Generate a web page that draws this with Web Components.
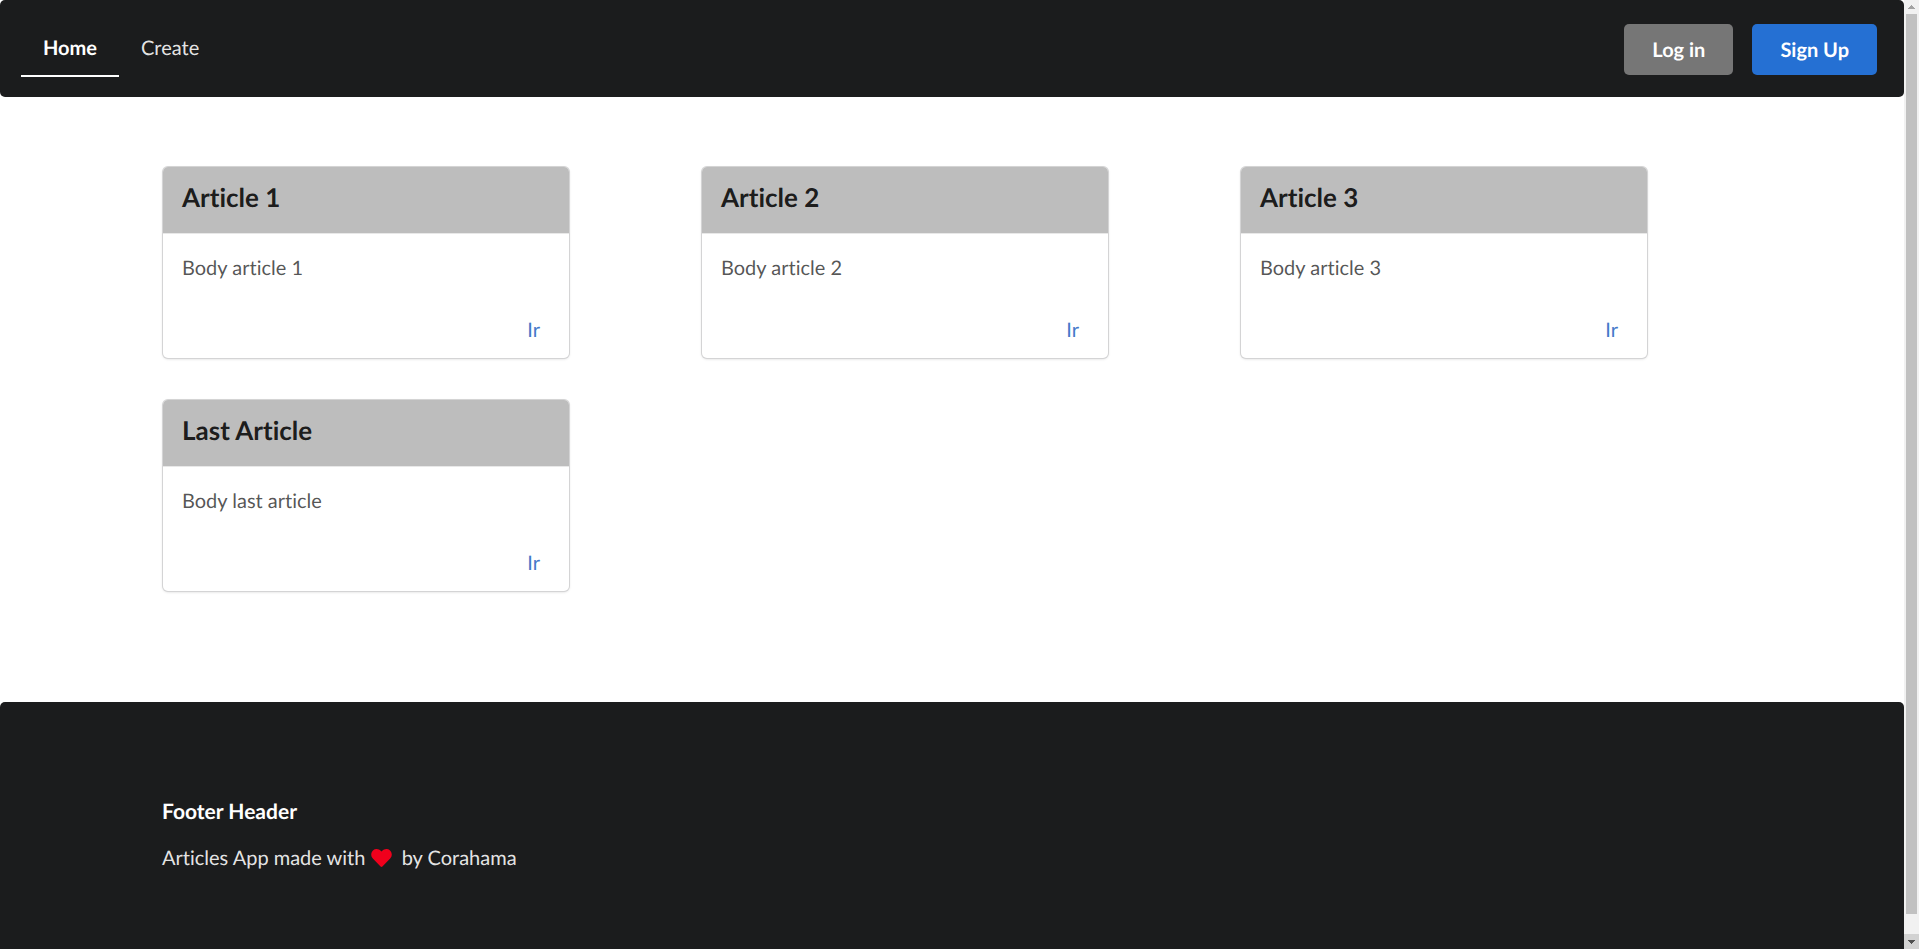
<!DOCTYPE html>
<html lang="en">
<head>
<meta charset="utf-8">
<title>Articles App</title>
<style>
html, body { margin: 0; background: #fff; }
body { font: 20px/28px Lato, "Liberation Sans", sans-serif; font-variant-ligatures: none; text-rendering: geometricPrecision; color: rgba(0,0,0,.87); }
</style>
</head>
<body>
<app-window>
  <app-navbar>
    <nav-item href="#home" active>Home</nav-item>
    <nav-item href="#create">Create</nav-item>
    <app-button slot="actions">Log in</app-button>
    <app-button slot="actions" kind="primary">Sign Up</app-button>
  </app-navbar>
  <article-list>
    <article-card href="#1"><span slot="title">Article 1</span>Body article 1</article-card>
    <article-card href="#2"><span slot="title">Article 2</span>Body article 2</article-card>
    <article-card href="#3"><span slot="title">Article 3</span>Body article 3</article-card>
    <article-card href="#4"><span slot="title">Last Article</span>Body last article</article-card>
  </article-list>
  <app-footer>
    <span slot="title">Footer Header</span>
    Articles App made with <heart-icon></heart-icon> by Corahama
  </app-footer>
</app-window>
<script>
function define(name, render) {
  customElements.define(name, class extends HTMLElement {
    constructor() {
      super();
      this.attachShadow({ mode: 'open' });
    }
    connectedCallback() {
      this.shadowRoot.innerHTML = render(this);
    }
  });
}

define('app-window', () => `
  <style>
    :host { display: grid; grid-template-columns: minmax(0, 1fr) 15px; height: 100vh; overflow: hidden; }
    .page { display: flex; flex-direction: column; min-height: 0; overflow: hidden; }
    ::slotted(*) { flex: none; }
    ::slotted(app-footer) { flex: 1 0 auto; }
  </style>
  <div class="page"><slot></slot></div>
  <scroll-rail></scroll-rail>`);

define('scroll-rail', () => `
  <style>
    :host { display: flex; flex-direction: column; background: #f1f1f1; }
    .arrow { flex: none; height: 14px; display: grid; place-items: center; }
    .down { background: #d2d2d2; height: 15px; }
    .track { flex: 1; padding: 0 2px 20px; display: flex; flex-direction: column; }
    .thumb { flex: 1; background: #c1c1c1; }
    svg { display: block; }
  </style>
  <div class="arrow"><svg width="7" height="4" viewBox="0 0 7 4" shape-rendering="crispEdges"><path d="M3 0h1v1h1v1h1v1h1v1H0V3h1V2h1V1h1z" fill="#a3a3a3"/></svg></div>
  <div class="track"><div class="thumb"></div></div>
  <div class="arrow down"><svg width="7" height="4" viewBox="0 0 7 4" shape-rendering="crispEdges"><path d="M0 0h7v1H6v1H5v1H4v1H3V3H2V2H1V1H0z" fill="#505050"/></svg></div>`);

define('app-navbar', () => `
  <style>
    :host { display: block; background: #1b1c1d; border-radius: 5px; }
    nav { display: flex; align-items: center; height: 97px; padding: 2px 27px 0 21px; box-sizing: border-box; }
    .items { display: flex; flex: 1; }
    .actions { display: flex; gap: 19px; }
  </style>
  <nav>
    <div class="items"><slot></slot></div>
    <div class="actions"><slot name="actions"></slot></div>
  </nav>`);

define('nav-item', el => `
  <style>
    :host { display: block; }
    a { display: block; padding: 11px 22px 13px; line-height: 28px; color: rgba(255,255,255,.9); text-decoration: none; border-bottom: 2px solid transparent; }
    :host([active]) a { font-weight: 700; color: #fff; border-color: #fff; }
  </style>
  <a href="${el.getAttribute('href')}"><slot></slot></a>`);

define('app-button', () => `
  <style>
    :host { display: block; }
    button { display: block; border: 0; margin: 0; padding: 0 28px; height: 51px; border-radius: 5px; background: #767676; color: #fff; font: 700 20px/20px Lato, "Liberation Sans", sans-serif; text-rendering: inherit; cursor: pointer; }
    :host([kind=primary]) button { background: #2570d3; }
  </style>
  <button type="button"><slot></slot></button>`);

define('article-list', () => `
  <style>
    :host { display: grid; grid-template-columns: repeat(3, minmax(0, 1fr)); gap: 42px 133px; padding: 70px 257px 111px 163px; }
  </style>
  <slot></slot>`);

define('article-card', el => `
  <style>
    :host { display: block; }
    article { border-radius: 5px; overflow: hidden; background: #fff; box-shadow: 0 1px 3px 0 #d4d4d5, 0 0 0 1px #d4d4d5; }
    h2 { margin: 0; padding: 14px 19px 19px; background: #bdbdbd; font-size: 26px; line-height: 33px; font-weight: 700; }
    p { margin: 0; padding: 20px 19px 15px; border-top: 1px solid #e8e8e8; line-height: 28px; color: rgba(0,0,0,.68); }
    footer { display: flex; justify-content: flex-end; padding: 19px 29px 14px; }
    a { color: #4479c9; line-height: 28px; text-decoration: none; }
  </style>
  <article>
    <h2><slot name="title"></slot></h2>
    <p><slot></slot></p>
    <footer><a href="${el.getAttribute('href')}">Ir</a></footer>
  </article>`);

define('app-footer', () => `
  <style>
    :host { display: block; background: #1b1c1d; color: rgba(255,255,255,.9); border-radius: 5px 5px 0 0; }
    footer { padding: 96px 162px 70px; }
    h4 { margin: 0 0 18px; font-size: 21px; line-height: 28px; font-weight: 700; color: #fff; }
    p { margin: 0; line-height: 28px; }
  </style>
  <footer>
    <h4><slot name="title"></slot></h4>
    <p><slot></slot></p>
  </footer>`);

define('heart-icon', () => `
  <style>
    :host { display: inline-block; margin-right: 5px; vertical-align: -2px; }
    svg { display: block; }
  </style>
  <svg width="21" height="18" viewBox="0 0 512 448" aria-hidden="true"><path fill="#f0001c" d="M462 30C408-16 326-8 276 44l-20 20-20-20C186-8 104-16 50 30c-63 54-66 150-10 208l193 199c12 13 33 13 46 0l193-199c56-58 53-154-10-208z"/></svg>`);
</script>
</body>
</html>
